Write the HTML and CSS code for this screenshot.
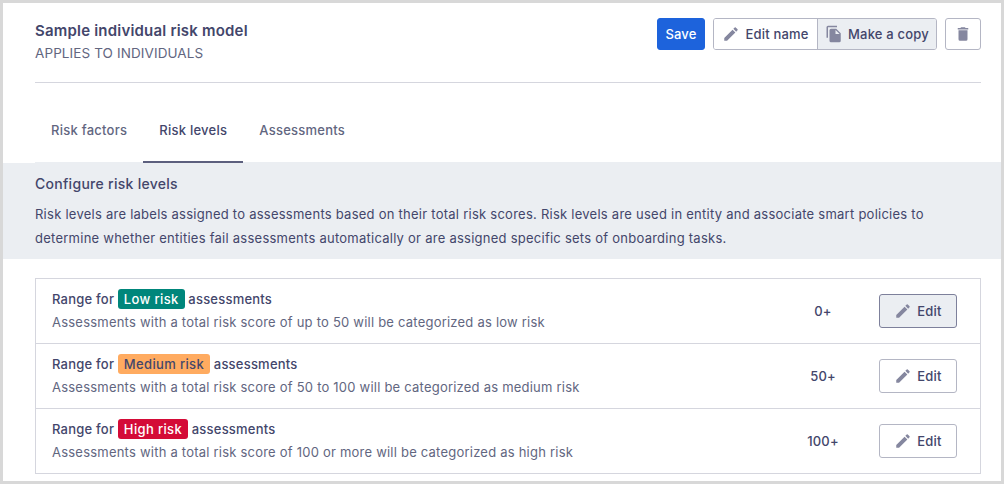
FILE: index.html
```html
<!DOCTYPE html>
<html lang="en">
<head>
  <meta charset="UTF-8" />
  <title>Sample individual risk model</title>
  <link rel="stylesheet" href="styles.css">
</head>
<body>
  <div class="frame">
    <!-- Header -->
    <div class="header">
      <div class="title-block">
        <h1 class="model-name">Sample individual risk model</h1>
        <p class="model-type">APPLIES TO INDIVIDUALS</p>
      </div>
      <div class="actions">
        <button class="btn btn-primary">Save</button>
        <div class="btn-group">
          <button class="btn btn-group-item">
            <svg class="icon" viewBox="0 0 24 24"><path d="M3 17.25V21h3.75L17.81 9.94l-3.75-3.75L3 17.25zM20.71 7.04a1 1 0 0 0 0-1.41l-2.34-2.34a1 1 0 0 0-1.41 0l-1.83 1.83 3.75 3.75 1.83-1.83z"/></svg>
            Edit name
          </button>
          <button class="btn btn-group-item is-active">
            <svg class="icon" viewBox="0 0 24 24"><path d="M16 1H4a2 2 0 0 0-2 2v14h2V3h12V1zm-1 4H8a2 2 0 0 0-2 2v14a2 2 0 0 0 2 2h11a2 2 0 0 0 2-2V11l-6-6zm-1 7V6.5l5.5 5.5H14z"/></svg>
            Make a copy
          </button>
        </div>
        <button class="btn btn-icon" aria-label="Delete">
          <svg class="icon" viewBox="0 0 24 24"><path d="M6 19a2 2 0 0 0 2 2h8a2 2 0 0 0 2-2V7H6v12zM19 4h-3.5l-1-1h-5l-1 1H5v2h14V4z"/></svg>
        </button>
      </div>
    </div>

    <!-- Tabs -->
    <div class="tabs">
      <a class="tab">Risk factors</a>
      <a class="tab active">Risk levels</a>
      <a class="tab">Assessments</a>
    </div>

    <!-- Intro band -->
    <div class="intro">
      <h2>Configure risk levels</h2>
      <p>Risk levels are labels assigned to assessments based on their total risk scores. Risk levels are used in entity and associate smart policies to<br>determine whether entities fail assessments automatically or are assigned specific sets of onboarding tasks.</p>
    </div>

    <!-- Levels -->
    <div class="levels">
      <div class="level">
        <div class="level-text">
          <div class="level-title">Range for <span class="tag tag-low">Low risk</span> assessments</div>
          <div class="level-desc">Assessments with a total risk score of up to 50 will be categorized as low risk</div>
        </div>
        <div class="level-score">0+</div>
        <button class="btn btn-edit is-active">
          <svg class="icon" viewBox="0 0 24 24"><path d="M3 17.25V21h3.75L17.81 9.94l-3.75-3.75L3 17.25zM20.71 7.04a1 1 0 0 0 0-1.41l-2.34-2.34a1 1 0 0 0-1.41 0l-1.83 1.83 3.75 3.75 1.83-1.83z"/></svg>
          Edit
        </button>
      </div>
      <div class="level">
        <div class="level-text">
          <div class="level-title">Range for <span class="tag tag-medium">Medium risk</span> assessments</div>
          <div class="level-desc">Assessments with a total risk score of 50 to 100 will be categorized as medium risk</div>
        </div>
        <div class="level-score">50+</div>
        <button class="btn btn-edit">
          <svg class="icon" viewBox="0 0 24 24"><path d="M3 17.25V21h3.75L17.81 9.94l-3.75-3.75L3 17.25zM20.71 7.04a1 1 0 0 0 0-1.41l-2.34-2.34a1 1 0 0 0-1.41 0l-1.83 1.83 3.75 3.75 1.83-1.83z"/></svg>
          Edit
        </button>
      </div>
      <div class="level">
        <div class="level-text">
          <div class="level-title">Range for <span class="tag tag-high">High risk</span> assessments</div>
          <div class="level-desc">Assessments with a total risk score of 100 or more will be categorized as high risk</div>
        </div>
        <div class="level-score">100+</div>
        <button class="btn btn-edit">
          <svg class="icon" viewBox="0 0 24 24"><path d="M3 17.25V21h3.75L17.81 9.94l-3.75-3.75L3 17.25zM20.71 7.04a1 1 0 0 0 0-1.41l-2.34-2.34a1 1 0 0 0-1.41 0l-1.83 1.83 3.75 3.75 1.83-1.83z"/></svg>
          Edit
        </button>
      </div>
    </div>
  </div>
</body>
</html>
```

FILE: styles.css
```css
html, body {
  margin: 0;
  padding: 0;
}
body {
  width: 1004px;
  height: 484px;
  overflow: hidden;
  font-family: Inter, "Liberation Sans", sans-serif;
  color: #43466b;
  background: #fff;
}
.frame {
  box-sizing: border-box;
  width: 1004px;
  height: 484px;
  border: 3px solid #d8d8d8;
  background: #fff;
  overflow: hidden;
}

/* Header */
.header {
  display: flex;
  justify-content: space-between;
  margin: 0 20px 0 32px;
  height: 80px;
  box-sizing: border-box;
  padding-top: 15px;
  border-bottom: 1px solid #d5d6de;
}
.model-name {
  margin: 3px 0 0;
  font-size: 15px;
  line-height: 20px;
  font-weight: 600;
  letter-spacing: 0.2px;
  color: #43466b;
}
.model-type {
  margin: 3px 0 0;
  font-size: 13.5px;
  line-height: 18px;
  letter-spacing: 0.1px;
  color: #62667f;
}
.actions {
  display: flex;
  align-items: flex-start;
  gap: 8px;
}

/* Buttons */
.btn {
  display: flex;
  align-items: center;
  justify-content: center;
  gap: 5px;
  box-sizing: border-box;
  height: 32px;
  padding: 0;
  border: 1px solid #b4b6c4;
  border-radius: 3px;
  background: #fff;
  color: #43466b;
  font-family: inherit;
  font-size: 13px;
  font-weight: 500;
  letter-spacing: 0.2px;
  white-space: nowrap;
}
.btn-primary {
  width: 48px;
  background: #1d63dc;
  border-color: #1d63dc;
  color: #fff;
}
.btn-group {
  display: flex;
  border: 1px solid #b4b6c4;
  border-radius: 3px;
  overflow: hidden;
}
.btn-group-item {
  height: 30px;
  border: none;
  border-radius: 0;
  width: 103px;
}
.btn-group-item.is-active {
  width: 119px;
  border-left: 1px solid #b4b6c4;
}
.is-active {
  background: #ebeef2;
}
.btn-icon {
  width: 36px;
}
.btn-edit {
  width: 78px;
  height: 34px;
}
.btn-edit.is-active {
  border-color: #7d809b;
}
.icon {
  width: 18px;
  height: 18px;
  fill: #85879f;
  flex: none;
}

/* Tabs */
.tabs {
  display: flex;
  margin-left: 32px;
  height: 80px;
  box-sizing: border-box;
  align-items: stretch;
  box-shadow: inset 0 -1px 0 #ebeef2;
}
.tab {
  display: flex;
  align-items: center;
  padding: 30px 16px 14px;
  box-sizing: border-box;
  border-bottom: 2px solid transparent;
  font-size: 13px;
  font-weight: 500;
  letter-spacing: 0.25px;
  color: #62667f;
}
.tab.active {
  color: #43466b;
  border-bottom-color: #5c5f7e;
}

/* Intro band */
.intro {
  height: 96px;
  box-sizing: border-box;
  padding: 12px 32px 0;
  background: #ebeef2;
}
.intro h2 {
  margin: 0;
  font-size: 14px;
  line-height: 18px;
  font-weight: 500;
  letter-spacing: 0.28px;
  color: #43466b;
}
.intro p {
  margin: 9px 0 0;
  font-size: 13px;
  line-height: 24px;
  letter-spacing: 0.25px;
  color: #43466b;
}

/* Levels */
.levels {
  margin: 19px 20px 0 32px;
  border: 1px solid #d5d6de;
}
.level {
  display: flex;
  align-items: center;
  height: 64px;
  padding: 0 23px 0 16px;
  border-top: 1px solid #d5d6de;
}
.level:first-child {
  border-top: none;
}
.level-text {
  flex: 1;
  padding-bottom: 3px;
}
.level-title {
  font-size: 13px;
  line-height: 20px;
  font-weight: 500;
  letter-spacing: 0.22px;
  color: #43466b;
}
.level-desc {
  margin-top: 4px;
  font-size: 13px;
  line-height: 18px;
  letter-spacing: 0.22px;
  color: #62667f;
}
.tag {
  display: inline-block;
  padding: 0 6px;
  border-radius: 3px;
  line-height: 20px;
  letter-spacing: 0.35px;
  color: #fff;
}
.tag-low {
  background: #00867b;
}
.tag-medium {
  background: #ffab60;
  color: #43466b;
}
.tag-high {
  background: #d40b37;
}
.level-score {
  width: 80px;
  margin-right: 16px;
  text-align: center;
  font-size: 13px;
  font-weight: 500;
  letter-spacing: 0.2px;
  color: #43466b;
}
```
